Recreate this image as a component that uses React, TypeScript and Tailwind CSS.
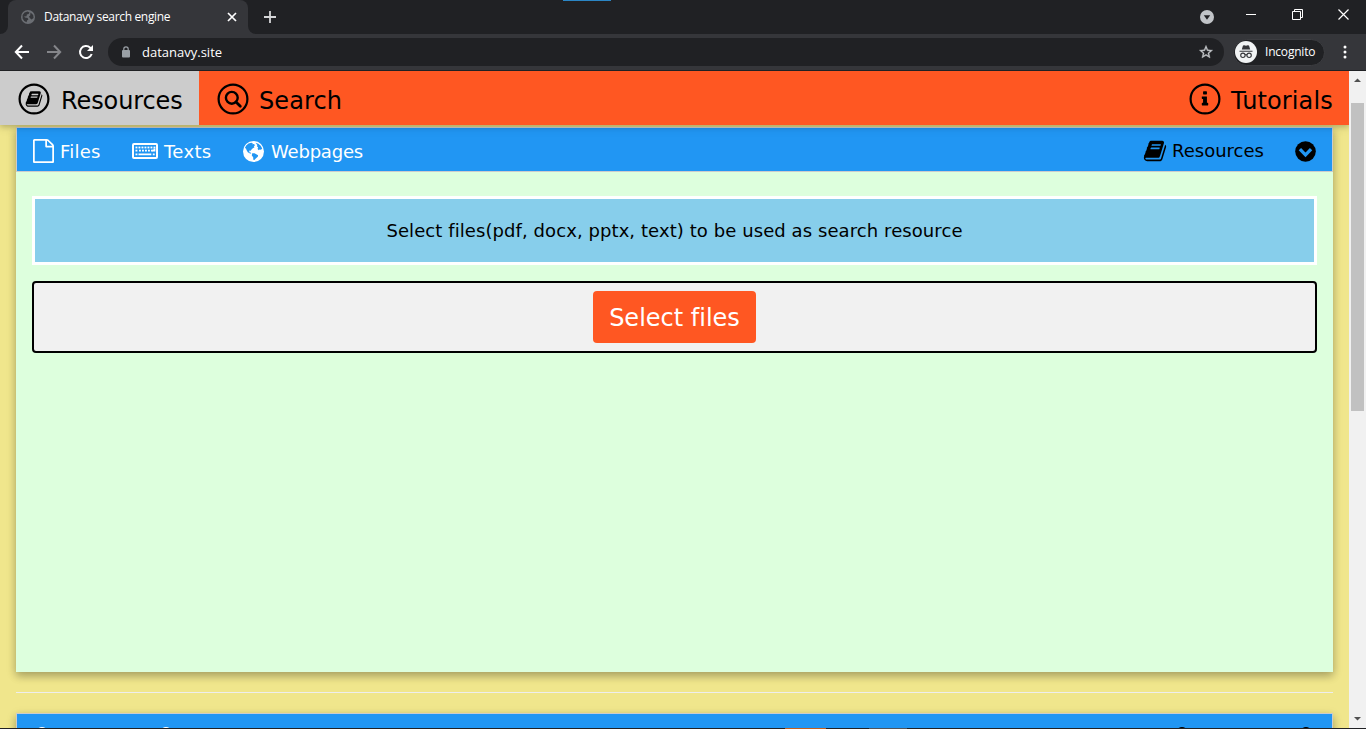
import React from "react";

const BOOK =
  "M1703 478q40 57 18 129l-275 906q-19 64-76.5 107.5t-122.5 43.5h-923q-77 0-148.5-53.5t-99.5-131.5q-24-67-2-127 0-4 3-27t4-37q1-8-3-21.5t-3-19.5q2-11 8-21t16.5-23.5 16.5-23.5q23-38 45-91.5t30-91.5q3-10 .5-30t-.5-28q3-11 17-28t17-23q21-36 42-92t25-90q1-9-2.5-32t.5-28q4-13 22-30.5t22-22.5q19-26 42.5-84.5t27.5-96.5q1-8-3-25.5t-2-26.5q2-8 9-18t18-23 17-21q8-12 16.5-30.5t15-35 16-36 19.5-32 26.5-23.5 36-11.5 47.5 5.5l-1 3q38-9 51-9h761q74 0 114 56t18 130l-274 906q-36 119-71.5 153.5t-128.5 34.5h-869q-27 0-38 15-11 16-1 43 24 70 144 70h923q29 0 56-15.5t35-41.5l300-987q7-22 5-57 38 15 59 43zm-1064 2q-4 13 2 22.5t20 9.5h608q13 0 25.5-9.5t16.5-22.5l21-64q4-13-2-22.5t-20-9.5h-608q-13 0-25.5 9.5t-16.5 22.5zm-83 256q-4 13 2 22.5t20 9.5h608q13 0 25.5-9.5t16.5-22.5l21-64q4-13-2-22.5t-20-9.5h-608q-13 0-25.5 9.5t-16.5 22.5z";
const INFO =
  "M1216 1344v128q0 26-19 45t-45 19h-512q-26 0-45-19t-19-45v-128q0-26 19-45t45-19h64v-384h-64q-26 0-45-19t-19-45v-128q0-26 19-45t45-19h384q26 0 45 19t19 45v576h64q26 0 45 19t19 45zm-128-1152v192q0 26-19 45t-45 19h-256q-26 0-45-19t-19-45v-192q0-26 19-45t45-19h256q26 0 45 19t19 45z";
const FILE =
  "M1596 380q28 28 48 76t20 88v1152q0 40-28 68t-68 28h-1344q-40 0-68-28t-28-68v-1600q0-40 28-68t68-28h896q40 0 88 20t76 48zm-444-244v376h376q-10-29-22-41l-313-313q-12-12-41-22zm384 1528v-1024h-416q-40 0-68-28t-28-68v-416h-768v1536h1280z";

function CircleIcon({ children }: { children: React.ReactNode }) {
  return (
    <svg width="32" height="32" viewBox="0 0 32 32" className="shrink-0">
      <circle cx="16" cy="16" r="14.4" fill="none" stroke="black" strokeWidth="2.2" />
      {children}
    </svg>
  );
}

function Glyph({ d }: { d: string }) {
  return (
    <svg x="7" y="7" width="18" height="18" viewBox="0 0 1792 1792">
      <path d={d} />
    </svg>
  );
}

function ChevronDown() {
  return (
    <svg width="21" height="21" viewBox="0 0 21 21" className="mr-4 shrink-0">
      <circle cx="10.500" cy="10.500" r="10.300" fill="black" />
      <path d="M4.900 8.200 10.500 13.800 16.100 8.200" fill="none" stroke="#2196f3" strokeWidth="3.300" />
    </svg>
  );
}

function Globe() {
  return (
    <svg width="21" height="21" viewBox="0 0 21 21" className="shrink-0">
      <circle cx="10.500" cy="10.500" r="10.500" fill="white" />
      <path
        fill="#2196f3"
        d="M3.200 4.600 5.500 2.600 8.300 1.700 9.800 2.200 9.300 3.300 11 3 12 4.200 10.800 5.200 11.500 6.300 9.800 7.200 8.300 8.700 7.800 9.700 6.400 9.600 6.200 11.200 7.600 11.400 8.300 12.600 7 12.500 4.800 11.200 3.500 9 3 7.500 1.900 7.100zM12.500 1.700 15.400 2.700 17.700 4.700 19.200 7.600 18 8.800 16.600 8.400 15.700 9.300 14.600 7.900 15.100 6 13.900 5.400 14.300 4zM9.200 12.300 11.500 12.200 13.300 13.300 15.100 14.200 14.800 15.800 13 17.200 11.400 18.900 10.300 18.700 10.200 16.200 8.800 14.400z"
      />
    </svg>
  );
}

function Keyboard() {
  const rows = [
    [3.5, 6.5, 9.5, 12.5, 15.5, 18.5, 21.5],
    [3.5, 7, 10, 13, 16, 19],
  ];
  return (
    <svg width="26" height="16" viewBox="0 0 26 16" className="shrink-0">
      <rect x="1" y="1" width="24" height="14" rx="1" fill="none" stroke="white" strokeWidth="2" />
      {rows.map((r, i) => r.map((x) => <rect key={`${i}-${x}`} x={x} y={3.6 + i * 3.1} width="1.9" height="1.8" fill="white" />))}
      <path fill="white" d="M3.500 10.400h1.900v1.900H3.500zM6.500 10.400h12.800v1.900H6.500zM20.800 10.400h1.900v1.900h-1.900zM21.500 5.400h1.900v3.100h-3V6.700h1.100z" />
    </svg>
  );
}

function Browser() {
  return (
    <header className="flex h-[71px] shrink-0 flex-col border-b border-[#202124] bg-[#35363a] font-['Open_Sans',sans-serif] text-white">
      <div className="relative flex h-[34px] bg-[#202124]">
        <div className="absolute left-[563px] top-0 h-px w-12 bg-[#2b86c5]" />
        <div className="flex w-2 bg-[#35363a]"><div className="w-2 rounded-br-lg bg-[#202124]" /></div>
        <div className="flex w-60 items-center rounded-t-lg bg-[#35363a] pl-[13px]">
          <svg width="14" height="14" viewBox="0 0 14 14">
            <circle cx="7" cy="7" r="7" fill="#6b6e73" />
            <path fill="#35363a" d="M1.600 5 3.600 2.400 6.500 1.500 8.500 2.500 7.600 4 5.800 4.600 5.600 6.200 3 6.400 4 7.500 6.600 8 7.400 9.600 6 10.400 5.600 12.300 3.200 11 1.600 8.600zM9.500 2.600 12.200 5 12.600 8 10.500 9.600 8.800 8 8 6.600 9.200 5.600z" />
          </svg>
          <span className="ml-[9px] w-[183px] text-[12px] tracking-[-0.33px]">Datanavy search engine</span>
          <svg width="10" height="10" viewBox="0 0 10 10" stroke="white" strokeWidth="1.7"><path d="m1 1 8 8M9 1 1 9" /></svg>
        </div>
        <div className="flex w-2 bg-[#35363a]"><div className="w-2 rounded-bl-lg bg-[#202124]" /></div>
        <div className="flex flex-1 items-center pl-2">
          <svg width="12" height="12" viewBox="0 0 12 12" stroke="#d5d6d8" strokeWidth="1.8"><path d="M6 0v12M0 6h12" /></svg>
        </div>
        <div className="flex items-center pr-[17px]">
          <svg width="14" height="14" viewBox="0 0 14 14"><circle cx="7" cy="7" r="7" fill="#c1c4c8" /><path d="M3.800 5.200h6.400L7 9.800z" fill="#202124" /></svg>
          <svg className="ml-8 mb-[5px]" width="10" height="1"><path d="M0 .5h10" stroke="white" /></svg>
          <svg className="ml-[36px] mb-[6px]" width="11" height="11" viewBox="0 0 11 11" fill="none" stroke="white"><path d="M.5 2.500h8v8h-8zM2.500 2.500v-2h8v8h-2" /></svg>
          <svg className="ml-[35px] mb-[6px]" width="11" height="11" viewBox="0 0 11 11" stroke="white" strokeWidth="1.200"><path d="m.5.5 10 10M10.500.5.5 10.500" /></svg>
        </div>
      </div>
      <div className="flex h-9 items-center pl-[14px]">
        <svg width="16" height="16" viewBox="0 0 16 16" fill="none" stroke="white" strokeWidth="2"><path d="M15 8H2M8 1.500 1.800 8 8 14.500" /></svg>
        <svg className="ml-4" width="16" height="16" viewBox="0 0 16 16" fill="none" stroke="#85868a" strokeWidth="2"><path d="M1 8h13M8 1.500 14.200 8 8 14.500" /></svg>
        <svg className="ml-4" width="16" height="16" viewBox="0 0 16 16" fill="none" stroke="white" strokeWidth="2"><path d="M13.700 10A6 6 0 1 1 12.200 3.700L14 5.500" /><path d="M15 1v6H9z" fill="white" stroke="none" /></svg>
        <div className="ml-[14px] flex h-7 w-[1116px] items-center rounded-full bg-[#202124] pl-[14px] pr-[10px]">
          <svg width="8" height="12" viewBox="0 0 8 12"><rect y="4" width="8" height="7.500" rx="1" fill="#9aa0a6" /><path d="M1.800 4.500V3a2.200 2.200 0 0 1 4.400 0v1.500" fill="none" stroke="#9aa0a6" strokeWidth="1.200" /></svg>
          <span className="ml-3 flex-1 pt-px text-[13px]">datanavy.site</span>
          <svg width="16" height="16" viewBox="0 0 24 24" fill="#c4c7ca" stroke="#c4c7ca" strokeWidth="0.5"><path d="m22 9.240-7.190-.620L12 2 9.190 8.630 2 9.240l5.460 4.730L5.820 21 12 17.270 18.180 21l-1.630-7.030L22 9.240zM12 15.400l-3.760 2.270 1-4.280-3.320-2.880 4.380-.380L12 6.100l1.710 4.040 4.380.380-3.320 2.880 1 4.280L12 15.400z" /></svg>
        </div>
        <div className="ml-[9px] flex h-[27px] w-[92px] items-center rounded-full border border-[#3c3d41] bg-[#202124] pl-px">
          <svg width="22" height="22" viewBox="0 0 22 22">
            <circle cx="11" cy="11" r="11" fill="#f1f3f4" />
            <path fill="#35363a" d="M8 4.500 9.300 4.200 11 4.700l1.700-.5 1.300.3L15.200 8.500H6.800zM4.500 9.700h13v1.100h-13z" />
            <g fill="none" stroke="#35363a" strokeWidth="1.100"><circle cx="7.900" cy="14.300" r="2.200" /><circle cx="14.100" cy="14.300" r="2.200" /><path d="M10 14q1-.7 2 0" /></g>
          </svg>
          <span className="ml-2 text-[12px] tracking-[-0.2px]">Incognito</span>
        </div>
        <svg className="ml-[18px]" width="4" height="14" viewBox="0 0 4 14" fill="white"><circle cx="2" cy="2" r="1.500" /><circle cx="2" cy="7" r="1.500" /><circle cx="2" cy="12" r="1.500" /></svg>
      </div>
    </header>
  );
}

export default function App() {
  return (
    <div className="flex h-[729px] w-[1366px] flex-col overflow-hidden bg-[#202124]">
      <Browser />
      <div className="flex h-[657px] shrink-0">
        <main className="flex w-[1349px] flex-col overflow-hidden bg-[#f0e68c] font-['DejaVu_Sans',sans-serif] text-[18px] text-black [font-variant-ligatures:none]">
          <nav className="z-10 flex h-[54px] shrink-0 items-center bg-[#ff5722] text-[24px] shadow-[0_2px_5px_0_rgba(0,0,0,0.16),0_2px_10px_0_rgba(0,0,0,0.12)]">
            <div className="flex h-full w-[199px] items-center bg-[#ccc] pl-[18px] pt-[5px]">
              <div className="mb-[3px] mr-[11px]"><CircleIcon><Glyph d={BOOK} /></CircleIcon></div>
              <span className="tracking-[-0.1px]">Resources</span>
            </div>
            <div className="flex h-full flex-1 items-center pl-[18px] pt-[5px]">
              <div className="mb-[3px] mr-[10px]">
                <CircleIcon>
                  <g fill="none" stroke="black" strokeWidth="2.400">
                    <circle cx="14.800" cy="14.800" r="5.900" />
                    <path d="m19 19 4.300 4.300" strokeWidth="2.800" strokeLinecap="round" />
                  </g>
                </CircleIcon>
              </div>
              <span className="tracking-[0.1px]">Search</span>
            </div>
            <div className="flex h-full w-[160px] items-center pt-[5px]">
              <div className="mb-[3px] mr-[10px]"><CircleIcon><Glyph d={INFO} /></CircleIcon></div>
              <span className="tracking-[0.12px]">Tutorials</span>
            </div>
          </nav>
          <section className="mx-4 mt-[2px] flex h-[545px] w-[1317px] shrink-0 flex-col bg-[#ddffdd] shadow-[0_4px_8px_0_rgba(0,0,0,0.2),0_3px_10px_0_rgba(0,0,0,0.15)]">
            <div className="flex h-[45px] shrink-0 items-center border border-[#ccc] bg-[#2196f3] pl-[15px] pt-[3px] text-white">
              <svg className="ml-px mr-[6px]" width="21" height="24" viewBox="128 0 1536 1792" preserveAspectRatio="none" fill="white"><path d={FILE} /></svg>
              <span className="w-[72px] tracking-[0.2px]">Files</span>
              <Keyboard />
              <span className="ml-[6px] w-[79px] tracking-[0.35px]">Texts</span>
              <Globe />
              <span className="ml-[7px] flex-1 tracking-[-0.2px]">Webpages</span>
              <svg className="mb-px" width="24" height="24" viewBox="0 0 1792 1792" fill="black"><path d={BOOK} /></svg>
              <span className="mb-[2px] ml-[5px] w-[123px] text-black">Resources</span>
              <ChevronDown />
            </div>
            <div className="mx-4 mt-6 flex h-[69px] items-center justify-center border-[3px] border-white bg-[#87ceeb]">
              <span className="tracking-[0.08px]">Select files(pdf, docx, pptx, text) to be used as search resource</span>
            </div>
            <div className="mx-4 mt-4 flex h-[72px] items-center justify-center rounded border-2 border-black bg-[#f1f1f1]">
              <button className="h-[52px] w-[163px] rounded bg-[#ff5722] pt-px text-[24px] text-white">Select files</button>
            </div>
          </section>
          <hr className="mx-4 mt-5 h-px shrink-0 border-0 bg-[#eee]" />
          <section className="mx-4 mt-5 flex h-[60px] shrink-0 border border-[#ccc] bg-[#2196f3] shadow-[0_4px_8px_0_rgba(0,0,0,0.2),0_3px_10px_0_rgba(0,0,0,0.15)]">
            <div className="flex flex-1 items-start pt-[13px]">
              <span className="ml-[19px] h-3 w-3 rounded-full border-2 border-white" />
              <span className="ml-[112px] h-3 w-3 rounded-full border-2 border-white" />
            </div>
            <div className="flex items-start pt-[13px]">
              <span className="mr-[112px] h-3 w-3 rounded-full bg-black" />
              <span className="mr-[20px] h-3 w-3 rounded-full bg-black" />
            </div>
          </section>
        </main>
        <aside className="flex w-[17px] flex-col items-start bg-[#f1f1f1]">
          <svg width="17" height="32" viewBox="0 0 17 32"><path d="M5 11h7L8.500 7.500z" fill="#505050" /></svg>
          <div className="ml-[2px] h-[308px] w-[13px] bg-[#c1c1c1]" />
          <div className="flex-1" />
          <svg width="17" height="17" viewBox="0 0 17 17"><path d="M5 6h7L8.500 9.500z" fill="#505050" /></svg>
        </aside>
      </div>
      <div className="flex h-px"><div className="ml-[785px] h-px w-[41px] bg-[#c06020]" /><div className="ml-[43px] h-px w-[38px] bg-[#50545a]" /></div>
    </div>
  );
}
